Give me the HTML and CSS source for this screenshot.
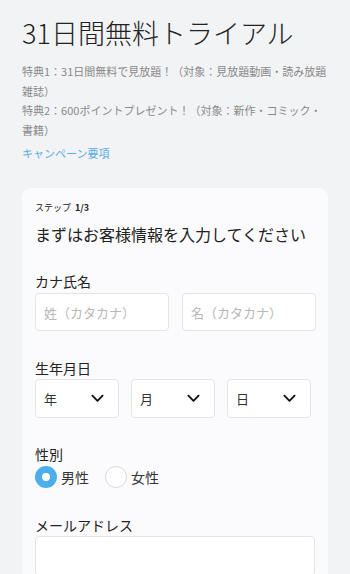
FILE: index.html
```html
<!DOCTYPE html>
<html lang="ja">
<head>
  <meta charset="UTF-8"/>
  <meta name="viewport" content="width=device-width, initial-scale=1.0"/>
  <title>31日間無料トライアル</title>
  <link rel="stylesheet" href="styles.css">
</head>
<body>
  <!-- Campaign header -->
  <h1 class="title">31日間無料トライアル</h1>
  <p class="perks">
    特典1：31日間無料で見放題！（対象：見放題動画・読み放題雑誌）<br>
    特典2：600ポイントプレゼント！（対象：新作・コミック・書籍）
  </p>
  <a class="campaign-link" href="#">キャンペーン要項</a>

  <!-- Signup form card -->
  <form class="card">
    <div class="step">ステップ <b>1/3</b></div>
    <h2 class="card-title">まずはお客様情報を入力してください</h2>

    <div class="field field-first">
      <label class="label">カナ氏名</label>
      <div class="row">
        <input class="input" type="text" placeholder="姓（カタカナ）">
        <input class="input" type="text" placeholder="名（カタカナ）">
      </div>
    </div>

    <div class="field">
      <label class="label">生年月日</label>
      <div class="row">
        <div class="select"><span>年</span><svg class="chevron" viewBox="0 0 14 9"><path d="M1.5 1.5 7 7l5.5-5.5"/></svg></div>
        <div class="select"><span>月</span><svg class="chevron" viewBox="0 0 14 9"><path d="M1.5 1.5 7 7l5.5-5.5"/></svg></div>
        <div class="select"><span>日</span><svg class="chevron" viewBox="0 0 14 9"><path d="M1.5 1.5 7 7l5.5-5.5"/></svg></div>
      </div>
    </div>

    <div class="field field-gender">
      <label class="label">性別</label>
      <div class="radios">
        <label class="radio"><span class="dot checked"></span>男性</label>
        <label class="radio"><span class="dot"></span>女性</label>
      </div>
    </div>

    <div class="field field-mail">
      <label class="label">メールアドレス</label>
      <input class="input input-wide" type="email">
    </div>
  </form>
</body>
</html>
```

FILE: styles.css
```css
/* Page base */
body {
  margin: 0;
  padding: 13px 22px 0;
  background-color: #f2f3f5;
  color: #222;
  font-family: "Noto Sans CJK JP", "Noto Sans", sans-serif;
}
/* Big heading */
.title {
  margin: 0;
  font-size: 27px;
  font-weight: 300;
  line-height: 40px;
  white-space: nowrap;
}
/* Perk description lines */
.perks {
  margin: 9px 0 0;
  font-size: 11px;
  line-height: 19.5px;
  color: #8a8a8a;
}
.campaign-link {
  display: block;
  margin-top: 3px;
  font-size: 11px;
  line-height: 20px;
  color: #5badde;
  text-decoration: none;
}
/* White form card */
.card {
  margin-top: 25px;
  padding: 13px 13px 30px;
  background-color: #fbfbfd;
  border-radius: 9px;
}
.step {
  font-size: 9px;
  line-height: 14px;
}
.step b {
  font-weight: 700;
  margin-left: 2px;
}
.card-title {
  margin: 7px 0 0;
  font-size: 16px;
  font-weight: 400;
  line-height: 24px;
}
/* Form fields */
.field {
  margin-top: 27px;
}
.field-first {
  margin-top: 25px;
}
.field-gender,
.field-mail {
  margin-top: 26px;
}
.label {
  display: block;
  font-size: 14px;
  line-height: 20px;
  color: #222;
}
.row {
  display: flex;
  gap: 12px;
  margin-top: 1px;
}
.field-first .row {
  gap: 13px;
  margin-top: 2px;
}
.input {
  box-sizing: border-box;
  width: 134px;
  height: 38px;
  padding: 0 8px;
  border: 1px solid #e4e4e6;
  border-radius: 4px;
  background-color: #fff;
  font-family: inherit;
  font-size: 13px;
  color: #222;
}
.input::placeholder {
  color: #b8b8b8;
}
.input-wide {
  display: block;
  width: 100%;
  height: 40px;
  margin-top: 1px;
}
/* Fake dropdowns */
.select {
  box-sizing: border-box;
  display: flex;
  align-items: center;
  justify-content: space-between;
  width: 84px;
  height: 39px;
  padding: 0 14px 0 8px;
  border: 1px solid #e4e4e6;
  border-radius: 4px;
  background-color: #fff;
  font-size: 13px;
  color: #333;
}
.chevron {
  width: 13px;
  height: 9px;
  fill: none;
  stroke: #111;
  stroke-width: 2;
  stroke-linecap: round;
  stroke-linejoin: round;
}
/* Radio buttons */
.radios {
  display: flex;
  gap: 16px;
  margin-top: 1px;
}
.radio {
  display: flex;
  align-items: center;
  gap: 4px;
  height: 24px;
  font-size: 14px;
  color: #333;
}
.dot {
  box-sizing: border-box;
  width: 22px;
  height: 22px;
  border: 1px solid #d8d8d8;
  border-radius: 50%;
  background-color: #fff;
}
.dot.checked {
  border: 7.5px solid #4caeea;
  background-color: #fff;
}
```
